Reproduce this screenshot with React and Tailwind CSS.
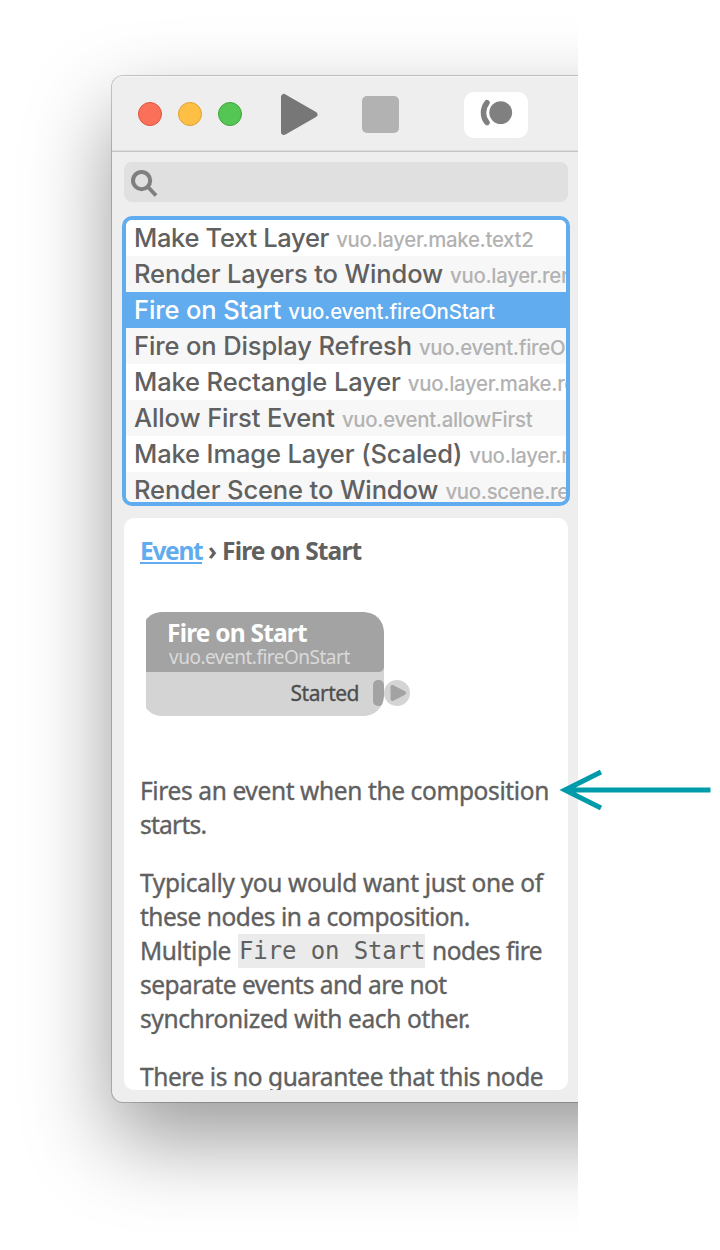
const NODES = [
  ["Make Text Layer", "vuo.layer.make.text2"],
  ["Render Layers to Window", "vuo.layer.render.window2"],
  ["Fire on Start", "vuo.event.fireOnStart"],
  ["Fire on Display Refresh", "vuo.event.fireOnDisplayRefresh"],
  ["Make Rectangle Layer", "vuo.layer.make.rectangle"],
  ["Allow First Event", "vuo.event.allowFirst"],
  ["Make Image Layer (Scaled)", "vuo.layer.make.scaled"],
  ["Render Scene to Window", "vuo.scene.render.window2"],
];

function Toolbar() {
  return (
    <div className="flex h-[76px] shrink-0 items-start border-b border-[#c4c4c4] bg-[linear-gradient(to_bottom,#f6f6f6_0,#f6f6f6_1px,#eee_1px,#eee_74px,#dcdcdc_74px)]">
      <div className="mt-[26px] ml-[26px] flex gap-4">
        <div className="size-6 rounded-full border border-[#e0533f] bg-[#fb7059]" />
        <div className="size-6 rounded-full border border-[#dfa032] bg-[#fec044]" />
        <div className="size-6 rounded-full border border-[#3da53b] bg-[#54c654]" />
      </div>
      <svg className="mt-[17px] ml-[38px] h-[44px] w-[40px]" viewBox="0 0 40 44">
        <path d="M4 4 V39 L34.500 21.500 Z" fill="#777" stroke="#777" strokeWidth="6" strokeLinejoin="round" />
      </svg>
      <div className="mt-5 ml-[41.5px] h-[37px] w-[37.5px] rounded-[5px] bg-[#b2b2b2]" />
      <div className="mt-4 ml-[65px] h-[46px] w-16 rounded-[10px] bg-white">
        <svg className="h-[46px] w-16" viewBox="0 0 64 46">
          <circle cx="36.7" cy="20.6" r="11.4" fill="#808080" />
          <path d="M23 10.700 C18.300 16.500 18.300 25 23 30.600" fill="none" stroke="#808080" strokeWidth="5.500" strokeLinecap="round" />
        </svg>
      </div>
    </div>
  );
}

function NodeList() {
  return (
    <div className="-mx-[2px] mt-[14px] flex h-[290px] shrink-0 flex-col overflow-hidden rounded-[10px] border-4 border-[#61acee] bg-white font-['Inter',sans-serif]">
      {NODES.map(([title, id], i) => (
        <div
          key={id}
          className={
            "h-9 shrink-0 overflow-hidden pl-2 text-[25.5px] leading-9 font-[450] whitespace-nowrap " +
            (i === 0 ? "tracking-[-0.32px] " : "tracking-[-0.12px] ") +
            (i === 2 ? "bg-[#61acee] text-white" : i % 2 ? "bg-[#f7f7f7] text-[#606060]" : "bg-white text-[#606060]")
          }
        >
          {title}
          <span className={"ml-[7px] text-[20.4px] " + (i === 2 ? "font-medium tracking-[-0.17px] text-white" : "tracking-[-0.3px] text-[#b2b2b2]")}>{id}</span>
        </div>
      ))}
    </div>
  );
}

function NodeDrawing() {
  return (
    <div className="ml-[6px] flex h-[104px] items-start">
      <div className="h-[104px] w-[238px] overflow-hidden rounded-r-[20px]">
        <div className="-ml-1 flex h-[104px] w-[242px] flex-col overflow-hidden rounded-[20px] bg-[#d4d4d4]">
          <div className="flex h-[60px] flex-col rounded-b-[5px] bg-[#a3a3a3] pl-[25px] whitespace-nowrap">
            <div className="mt-[7px] h-[27px] text-[24.5px] leading-[27px] font-bold tracking-[-0.8px] text-white">Fire on Start</div>
            <div className="ml-[2px] h-[22px] text-[19px] leading-[22px] tracking-[-0.5px] text-[#dadada]">vuo.event.fireOnStart</div>
          </div>
          <div className="flex h-[44px] items-start justify-end">
            <span className="mr-[14px] text-[21px] leading-[42px] tracking-[-0.5px] text-[#4d4d4d] [-webkit-text-stroke:0.3px]">Started</span>
            <div className="mt-2 h-[26px] w-[11px] rounded-[5px] bg-[#a3a3a3]" />
          </div>
        </div>
      </div>
      <svg className="mt-[68px] h-[26px] w-[26px]" viewBox="0 0 26 26">
        <circle cx="13" cy="13" r="13" fill="#d4d4d4" />
        <path d="M8.500 7 V19 L20 13 Z" fill="#a3a3a3" stroke="#a3a3a3" strokeWidth="4" strokeLinejoin="round" />
      </svg>
    </div>
  );
}

function Documentation() {
  return (
    <div className="mt-3 flex h-[572px] shrink-0 flex-col overflow-hidden rounded-[10px] bg-white pl-4 font-['Noto_Sans',sans-serif] text-[24.5px] leading-[34px] tracking-[-0.38px] whitespace-nowrap text-[#606060]">
      <div className="mt-4 mb-11 flex h-[34px] font-bold tracking-[-0.85px]">
        <span className="h-[30px] w-[62px] border-b-2 border-[#61acee] tracking-[-1.3px] text-[#61acee]">Event</span>
        <span className="ml-[6px]">›</span>
        <span className="ml-[6px]">Fire on Start</span>
      </div>
      <NodeDrawing />
      <div className="mt-[58px] flex flex-col gap-6 [-webkit-text-stroke:0.35px]">
        <p>
          Fires an event when the composition
          <br />
          <span className="tracking-[-0.75px]">starts.</span>
        </p>
        <p>
          <span className="tracking-[-0.34px]">Typically you would want just one of</span>
          <br />
          <span className="tracking-[-0.48px]">these nodes in a composition.</span>
          <br />
          Multiple{" "}
          <code className="ml-px inline-block h-[34px] w-[187px] bg-[#ebebeb] pl-px align-top font-['DejaVu_Sans_Mono',monospace] text-[24px] tracking-[-0.12px] [-webkit-text-stroke:0px]">Fire on Start</code>{" "}
          <span className="ml-px tracking-[-0.5px]">nodes fire</span>
          <br />
          <span className="tracking-[-0.54px]">separate events and are not</span>
          <br />
          synchronized with each other.
        </p>
        <p className="tracking-[-0.43px]">There is no guarantee that this node</p>
      </div>
    </div>
  );
}

export default function App() {
  return (
    <div className="relative h-[1250px] w-[720px] overflow-hidden bg-white">
      <div className="h-[1250px] w-[578px] overflow-hidden pt-[76px] pl-[112px]">
        <div className="h-[1026px] w-[900px] rounded-[11px] bg-[#eee] shadow-[0_0_0_1px_rgba(0,0,0,0.2),0_37px_86px_rgba(0,0,0,0.4)]">
          <div className="overflow-hidden rounded-t-[11px]">
            <Toolbar />
          </div>
          <div className="ml-3 flex w-[444px] flex-col pt-[10px]">
            <div className="flex h-10 shrink-0 rounded-lg bg-[#e0e0e0]">
              <svg className="mt-[7px] ml-[6px] size-7" viewBox="0 0 28 28" fill="none" stroke="#7f7f7f" strokeWidth="4">
                <circle cx="11.6" cy="11.6" r="8.6" />
                <path d="M17.500 17.500 L26 26.500" />
              </svg>
            </div>
            <NodeList />
            <Documentation />
          </div>
        </div>
      </div>
      <svg className="absolute top-[760px] left-[550px] h-[60px] w-[170px]" viewBox="0 0 170 60" fill="none" stroke="#009bab" strokeWidth="5">
        <path d="M160.500 30 H16 M51 12 L15 30 L51 48" />
      </svg>
    </div>
  );
}
